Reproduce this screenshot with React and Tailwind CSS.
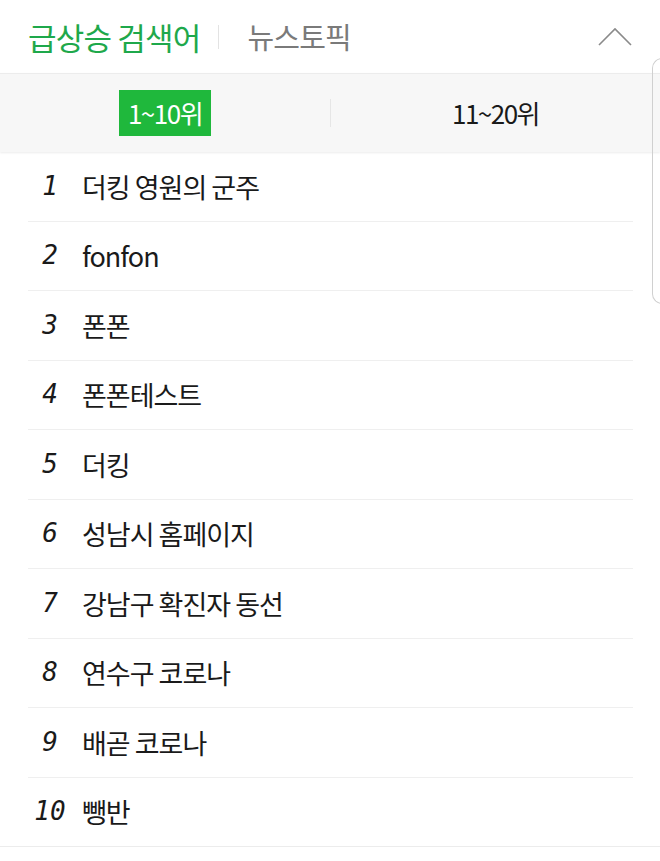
const items = [
  '더킹 영원의 군주',
  'fonfon',
  '폰폰',
  '폰폰테스트',
  '더킹',
  '성남시 홈페이지',
  '강남구 확진자 동선',
  '연수구 코로나',
  '배곧 코로나',
  '뺑반',
];

const kr = { fontFamily: '"Noto Sans CJK KR", "Noto Sans", sans-serif' };
const num = { fontFamily: '"DejaVu Sans Mono", "Liberation Mono", monospace' };

export default function App() {
  return (
    <div className="relative w-[660px] h-[861px] bg-white overflow-hidden" style={kr}>
      {/* header */}
      <div className="h-[73px] flex items-center pl-[28px] pr-[27px]">
        <span className="text-[31px] leading-none tracking-[-0.8px] text-[#1ea84b]">급상승 검색어</span>
        <span className="ml-[18px] mr-[28px] w-px h-[24px] bg-[#e3e3e3]" />
        <span className="text-[29px] leading-none tracking-[-0.8px] text-[#7a7a7a]">뉴스토픽</span>
        <svg className="ml-auto" width="36" height="22" viewBox="0 0 36 22" fill="none">
          <path d="M2 19 L18 3 L34 19" stroke="#8a8a8a" strokeWidth="1.6" />
        </svg>
      </div>

      {/* range tabs */}
      <div className="h-[79px] flex items-center bg-[#f7f7f7] border-t border-[#ececec] shadow-[0_1px_2px_rgba(0,0,0,0.08)]">
        <div className="w-[330px] flex justify-center">
          <span className="bg-[#1fb83c] text-white text-[26px] leading-none tracking-[-1.5px] w-[92px] h-[46px] flex items-center justify-center">
            1~10위
          </span>
        </div>
        <span className="w-px h-[28px] bg-[#e6e6e6]" />
        <div className="flex-1 flex justify-center">
          <span className="text-[#1a1a1a] text-[26px] leading-none tracking-[-1.5px]">11~20위</span>
        </div>
      </div>

      {/* list */}
      <ul>
        {items.map((t, i) => (
          <li
            key={i}
            className={
              i === 9
                ? 'h-[69.5px] flex items-center border-b border-[#ececec]'
                : 'h-[69.5px] pl-[28px] pr-[27px]'
            }
          >
            <div
              className={
                i === 9
                  ? 'flex items-center h-full pl-[28px]'
                  : 'flex items-center h-full border-b border-[#efefef]'
              }
            >
              <span className="w-[44px] text-center italic text-[26px] text-[#1a1a1a]" style={num}>
                {i + 1}
              </span>
              <span className="ml-[10px] text-[27px] leading-none tracking-[-1px] text-[#1a1a1a]">{t}</span>
            </div>
          </li>
        ))}
      </ul>

      {/* edge of an overlaid panel */}
      <div className="absolute left-[652px] top-[58px] w-[20px] h-[246px] border-l border-t border-b border-[#d0d0d0] rounded-l-[10px]" />
    </div>
  );
}
